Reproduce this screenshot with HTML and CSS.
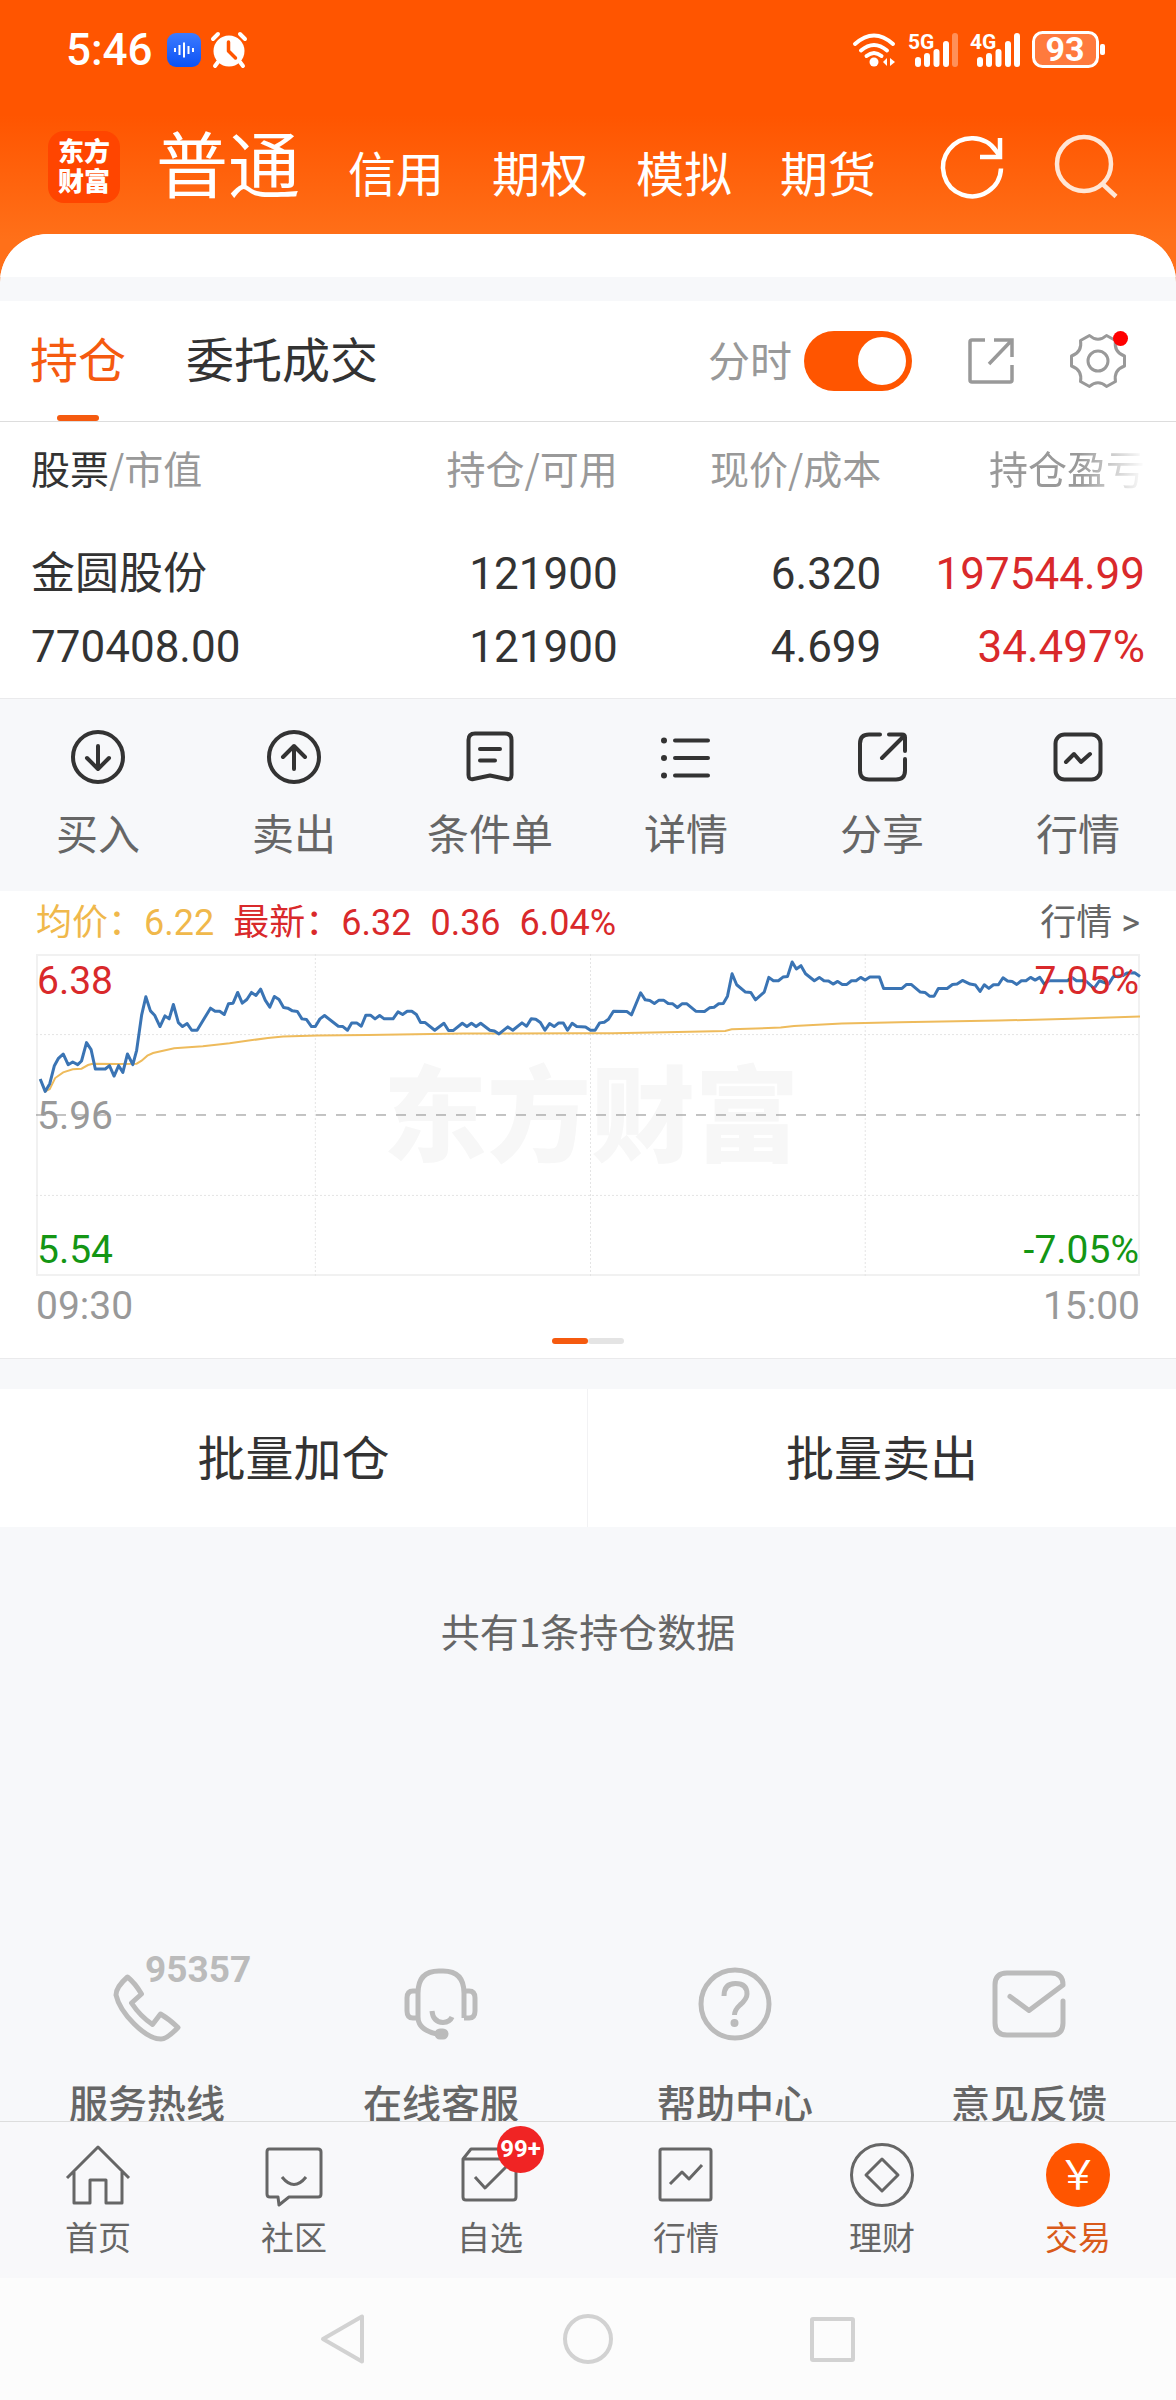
FILE: index.html
```html
<!DOCTYPE html>
<html lang="zh-CN">
<head>
<meta charset="utf-8">
<meta name="viewport" content="width=device-width, initial-scale=1">
<title>持仓 - 东方财富</title>
<link rel="stylesheet" href="styles.css">
</head>
<body>
<div class="page">

  <div class="status">
    <span class="status-time">5:46</span>
    <svg class="status-mic" width="34" height="34" viewBox="0 0 34 34" aria-hidden="true">
      <defs><linearGradient id="mic" x1="0" y1="0" x2="0" y2="1"><stop offset="0" stop-color="#3d7bff"/><stop offset="1" stop-color="#0b52f5"/></linearGradient></defs>
      <rect width="34" height="34" rx="9" fill="url(#mic)"/>
      <path d="M8 15v4M12.500 12v10M17 9.500v15M21.500 13v8M26 15v4" stroke="#fff" stroke-width="2"/>
    </svg>
    <svg class="status-alarm" width="36" height="36" viewBox="0 0 36 36" aria-hidden="true">
      <circle cx="18" cy="19" r="15.500" fill="#fff"/>
      <path d="M2 7l5-5M34 7l-5-5M7 30l-3 4M29 30l3 4" stroke="#fff" stroke-width="4" stroke-linecap="round"/>
      <path d="M17.500 10v9l7 7" fill="none" stroke="#ff5500" stroke-width="3.500" stroke-linecap="round" stroke-linejoin="round"/>
    </svg>
    <svg class="status-right" width="254" height="38" viewBox="0 0 254 38" aria-label="Wi-Fi 5G 4G 93%">
      <g fill="none" stroke="#fff" stroke-width="4" stroke-linecap="round">
        <path d="M3 13q19-17 38 0M9 19.500q13-11 26 0M14.500 25q7.500-6 15 0"/>
      </g>
      <circle cx="22" cy="31" r="4.500" fill="#fff"/>
      <path d="M35 27v8l-4-4zM38 27v8l5-4z" fill="#fff"/>
      <text class="net" x="56" y="18">5G</text>
      <text class="net" x="118" y="18">4G</text>
      <g stroke="#fff" stroke-width="6" stroke-linecap="round">
        <path d="M66 29v4M75 25v8M84.500 21v12M94 13v20M128 29v4M137 25v8M146.500 21v12M156 13v20M165 5v28"/>
        <path d="M103 5v28" opacity=".35"/>
      </g>
      <rect x="181.500" y="1.500" width="64" height="34" rx="9" fill="#ff7a3d" stroke="#fff" stroke-width="3"/>
      <rect x="248" y="13" width="5" height="11" rx="2" fill="#fff"/>
      <text class="battery" x="213" y="30" text-anchor="middle">93</text>
    </svg>
  </div>

  <header class="topbar">
    <a class="logo" href="#home">东方<br>财富</a>
    <nav class="accounts">
      <a class="account account-on" href="#normal">普通</a>
      <a class="account" href="#credit">信用</a>
      <a class="account" href="#option">期权</a>
      <a class="account" href="#sim">模拟</a>
      <a class="account" href="#futures">期货</a>
    </nav>
    <button class="icon-btn" type="button" aria-label="刷新">
      <svg width="64" height="64" viewBox="0 0 64 64" fill="none" stroke="#fff" stroke-width="4.500">
        <path d="M61 33.500A29 29 0 1 1 56 16L60 21"/><path d="M60 3v19H40"/>
      </svg>
    </button>
    <button class="icon-btn icon-search" type="button" aria-label="搜索">
      <svg width="64" height="64" viewBox="0 0 64 64" fill="none" stroke="#ffe6d6" stroke-width="4.500">
        <circle cx="30" cy="29" r="27"/><path d="M48 48.500l14 13"/>
      </svg>
    </button>
  </header>

  <main class="sheet">
    <div class="sheet-lip"></div>

    <section class="tabs">
      <button class="tab tab-on" type="button">持仓</button>
      <button class="tab" type="button">委托成交</button>
      <label class="switch-label" for="minute">分时</label>
      <input class="switch" id="minute" type="checkbox" checked>
      <button class="icon-btn tool" type="button" aria-label="导出">
        <svg width="48" height="48" viewBox="0 0 48 48" fill="none" stroke="#999" stroke-width="3.500">
          <path d="M18 3H5q-2 0-2 2v38q0 2 2 2h38q2 0 2-2V28"/><path d="M27 3h18v17M45 3L22 27"/>
        </svg>
      </button>
      <button class="icon-btn tool" type="button" aria-label="设置">
        <svg width="56" height="56" viewBox="-28 -28 56 56" fill="none" stroke="#999" stroke-width="3" stroke-linejoin="round">
          <path d="M-8.500-25.500Q0-18 8.500-25.500L17.500-20.500Q15.500-9 26.500-5V5Q15.500 9 17.500 20.500L8.500 25.500Q0 18-8.500 25.500L-17.500 20.500Q-15.500 9-26.500 5V-5Q-15.500-9-17.500-20.500Z"/>
          <circle r="10"/>
        </svg>
        <span class="dot"></span>
      </button>
    </section>

    <table class="holdings">
      <thead>
        <tr>
          <th class="c-name"><strong>股票</strong>/市值</th>
          <th>持仓/可用</th>
          <th>现价/成本</th>
          <th><span class="fade">持仓盈亏</span></th>
        </tr>
      </thead>
      <tbody>
        <tr>
          <td><span>金圆股份</span><span>770408.00</span></td>
          <td><span>121900</span><span>121900</span></td>
          <td><span>6.320</span><span>4.699</span></td>
          <td class="up"><span>197544.99</span><span>34.497%</span></td>
        </tr>
      </tbody>
    </table>

    <nav class="actions">
      <button class="action" type="button">
        <svg width="60" height="60" viewBox="0 0 60 60"><circle cx="30" cy="30" r="25"/><path d="M30 19v23M19 31l11 11 11-11"/></svg>买入
      </button>
      <button class="action" type="button">
        <svg width="60" height="60" viewBox="0 0 60 60"><circle cx="30" cy="30" r="25"/><path d="M30 42V19M19 30l11-11 11 11"/></svg>卖出
      </button>
      <button class="action" type="button">
        <svg width="60" height="60" viewBox="0 0 60 60"><path d="M15 6.500h30q6.500 0 6.500 6.500v35q0 5-5 4L30 48.500 13.500 52q-5 1-5-4V13q0-6.500 6.500-6.500zM20 22h20M20 33.500h15"/></svg>条件单
      </button>
      <button class="action" type="button">
        <svg width="60" height="60" viewBox="0 0 60 60"><path d="M19 13.500h33M19 31h33M19 48.500h33"/><g class="dots"><circle cx="8" cy="13.500" r="3"/><circle cx="8" cy="31" r="3"/><circle cx="8" cy="48.500" r="3"/></g></svg>详情
      </button>
      <button class="action" type="button">
        <svg width="60" height="60" viewBox="0 0 60 60"><path d="M28 7.500H17q-9 0-9 9v27q0 9 9 9h27q9 0 9-9V32M37 7.500h13q3 0 3 3V24M52 9L30 31"/></svg>分享
      </button>
      <button class="action" type="button">
        <svg width="60" height="60" viewBox="0 0 60 60"><rect x="7.500" y="7.500" width="45" height="45" rx="9"/><path d="M18 35l8-8 7 8 9-8"/></svg>行情
      </button>
    </nav>

    <section class="chart">
      <div class="quote">
        <span class="avg">均价：6.22</span>
        <span class="up">最新：6.32</span>
        <span class="up">0.36</span>
        <span class="up">6.04%</span>
        <a class="more" href="#quote">行情 &gt;</a>
      </div>
      <div class="plot">
        <span class="watermark" aria-hidden="true">东方财富</span>
        <svg class="lines" viewBox="94 42 2885 963" preserveAspectRatio="none" aria-label="分时走势">
          <g class="grid"><path d="M824 42v963M1543 42v963M2261 42v963M94 283h2885M94 764h2885"/></g>
          <path class="base" d="M94 523.500h2885"/>
          <polyline class="l-avg" points="105,416 118,453 130,446 144,413 165,396 190,387 213,385 230,374 242,370 310,371 357,370 370,361 385,346 400,338 455,324 530,318 600,309 650,301 700,293 740,289 830,286 960,284 1210,280 1505,279 1600,279 1740,276 1895,272 1912,267 2040,262 2075,257 2200,250 2350,246 2610,241 2800,236 2979,229"/>
          <polyline class="l-price" points="105,416 118,453 130,430 142,376 152,355 165,341 178,373 190,365 203,373 213,362 226,307 238,328 249,386 275,386 286,376 298,407 310,376 321,396 333,341 347,373 357,330 370,225 381,170 393,212 404,225 418,259 431,227 442,236 453,193 466,247 477,259 489,250 501,270 515,270 550,204 562,213 574,213 586,223 597,191 609,189 621,157 633,189 645,178 657,157 669,166 681,147 693,180 705,201 717,169 729,178 741,202 752,204 764,212 777,214 789,236 801,238 814,259 824,259 836,236 848,226 884,258 896,259 908,270 919,248 932,248 944,258 956,225 968,225 980,236 992,226 1004,236 1027,236 1040,215 1052,223 1064,213 1076,213 1088,223 1099,247 1111,247 1136,270 1160,249 1172,271 1184,271 1208,249 1220,259 1232,249 1244,259 1256,249 1280,270 1292,272 1304,281 1327,260 1340,270 1364,248 1376,258 1388,236 1400,237 1412,247 1424,270 1436,250 1448,259 1460,248 1472,248 1483,270 1495,249 1507,259 1530,260 1543,270 1555,270 1567,248 1579,246 1590,237 1603,213 1638,214 1650,224 1674,158 1686,179 1698,181 1710,190 1722,180 1734,180 1746,190 1758,191 1770,202 1782,191 1795,191 1818,213 1841,214 1854,203 1866,201 1878,191 1890,190 1901,168 1913,101 1925,134 1948,156 1962,157 1974,179 1997,156 2009,112 2021,122 2034,122 2046,111 2058,109 2070,66 2081,87 2093,77 2105,101 2128,122 2141,112 2153,122 2165,123 2177,132 2189,124 2201,133 2213,133 2225,122 2237,122 2249,112 2261,120 2273,111 2298,111 2309,145 2357,145 2369,133 2381,133 2405,156 2417,157 2429,168 2441,168 2452,145 2475,145 2489,133 2501,132 2515,121 2535,132 2549,135 2561,154 2572,134 2584,145 2596,134 2609,134 2621,113 2633,123 2645,124 2657,133 2669,122 2681,122 2693,112 2705,120 2717,112 2729,132 2741,122 2789,122 2801,112 2813,122 2837,122 2859,145 2873,122 2897,132 2909,110 2935,106 2945,99 2965,98 2979,109"/>
        </svg>
        <div class="scale">
          <div class="scale-row up"><span>6.38</span><span>7.05%</span></div>
          <div class="scale-row mid"><span>5.96</span></div>
          <div class="scale-row down"><span>5.54</span><span>-7.05%</span></div>
        </div>
      </div>
      <div class="times"><span>09:30</span><span>15:00</span></div>
      <div class="pager"><i class="page-on"></i><i></i></div>
    </section>

    <section class="batch">
      <button class="batch-btn" type="button">批量加仓</button>
      <button class="batch-btn" type="button">批量卖出</button>
    </section>

    <p class="summary">共有1条持仓数据</p>

    <section class="services">
      <a class="service" href="tel:95357">
        <span class="service-icon">
          <svg width="80" height="80" viewBox="0 0 80 80"><path d="M20.500 12Q9 22 9 30C13 48 38 74 54 74Q60 74 71 62.500Q62 54 53.500 49L45.500 59.500Q33 51 24.500 38L34.500 29Q28 18 20.500 12z"/></svg>
          <b class="hotline">95357</b>
        </span>服务热线
      </a>
      <a class="service" href="#chat">
        <svg width="80" height="80" viewBox="0 0 80 80"><path d="M36 69Q17 65 17 52V28Q17 6 38 6h4q21 0 21 22v25M17 26h-5q-6 0-6 7v13q0 7 6 7h5M63 26h5q6 0 6 7v13q0 7-6 7h-5M31 46Q32 57 42 57.500Q49 57 51 52"/><rect class="solid" x="36" y="66" width="9" height="6" rx="3"/></svg>在线客服
      </a>
      <a class="service" href="#help">
        <svg width="80" height="80" viewBox="0 0 80 80"><circle cx="40" cy="39" r="34"/><path d="M29 31Q29 18.500 40.500 18.500Q52 18.500 52 29Q52 34 45 40Q39.500 45 39.500 50"/><circle class="solid" cx="39.500" cy="58" r="1.500"/></svg>帮助中心
      </a>
      <a class="service" href="#feedback">
        <svg width="80" height="80" viewBox="0 0 80 80"><path d="M74 36V58q0 12-12 12H18Q6 70 6 58V20Q6 8 18 8H62Q74 8 74 20L40 45.500 21 31.500" stroke-linecap="round"/></svg>意见反馈
      </a>
    </section>
  </main>

  <nav class="tabbar">
    <a class="bar-item" href="#index">
      <svg width="64" height="64" viewBox="0 0 64 64"><path d="M1 35L32 4l31 31M8 29v31h16V37h16v23h16V29"/></svg>首页
    </a>
    <a class="bar-item" href="#community">
      <svg width="64" height="64" viewBox="0 0 64 64"><path d="M7 6h49q3 0 3 3v42q0 3-3 3H27l-10 8-1-8H8q-3 0-3-3V9q0-3 2-3zM20 34q12 15 24 0"/></svg>社区
    </a>
    <a class="bar-item" href="#watchlist">
      <span class="bar-icon">
        <svg width="64" height="64" viewBox="0 0 64 64"><path d="M5 16h53v38q0 3-3 3H8q-3 0-3-3V16l8-10h42l3 10M17 34l10 11 21-21"/></svg>
        <span class="badge">99+</span>
      </span>自选
    </a>
    <a class="bar-item" href="#market">
      <svg width="64" height="64" viewBox="0 0 64 64"><rect x="6" y="6" width="51" height="51" rx="2"/><path d="M16 41l12-12 7 7 13-14"/></svg>行情
    </a>
    <a class="bar-item" href="#wealth">
      <svg width="64" height="64" viewBox="0 0 64 64"><circle cx="32" cy="32" r="30.500"/><path d="M32 16l16 16-16 16-16-16z"/></svg>理财
    </a>
    <a class="bar-item bar-on" href="#trade">
      <svg width="64" height="64" viewBox="0 0 64 64"><circle class="coin" cx="32" cy="32" r="32"/><text class="yen" x="32" y="46" text-anchor="middle">￥</text></svg>交易
    </a>
  </nav>

  <div class="sysnav">
    <button class="icon-btn" type="button" aria-label="返回"><svg width="56" height="56" viewBox="0 0 56 56"><path d="M47 5.500V50.500L8 28z"/></svg></button>
    <button class="icon-btn" type="button" aria-label="主屏幕"><svg width="56" height="56" viewBox="0 0 56 56"><circle cx="28" cy="28" r="23"/></svg></button>
    <button class="icon-btn" type="button" aria-label="最近任务"><svg width="56" height="56" viewBox="0 0 56 56"><rect x="7" y="8" width="41" height="41" rx="1"/></svg></button>
  </div>
</div>
</body>
</html>
```
FILE: styles.css
```css
* { box-sizing: border-box; }

body {
  margin: 0;
  font-family: "Noto Sans CJK SC", "Noto Sans", sans-serif;
  color: #333;
  background: #f7f8fa;
}

a { color: inherit; text-decoration: none; }

button {
  margin: 0;
  padding: 0;
  border: 0;
  background: none;
  color: inherit;
  font: inherit;
}

svg { display: block; flex: none; overflow: visible; }

/* figures are set in Roboto, Chinese falls through to Noto */
.status, .holdings td, .quote, .scale, .times, .hotline, .badge {
  font-family: Roboto, "Noto Sans CJK SC", sans-serif;
}

.page {
  display: flex;
  flex-direction: column;
  min-height: 100vh;
  background: linear-gradient(#ff5500 115px, #ff7019 240px) no-repeat 0 0 / 100% 300px;
}

.up { color: #d9292b; }
.down { color: #149614; }

/* status bar */
.status {
  display: flex;
  align-items: center;
  height: 100px;
  padding: 0 70px 0 66px;
  color: #fff;
}
.status-time {
  font-size: 44px;
  line-height: 44px;
  font-weight: 500;
}
.status-mic { margin-left: 14px; }
.status-alarm { margin-left: 10px; }
.status-right { margin-left: auto; }
.net { font-size: 21px; font-weight: 700; fill: #fff; }
.battery { font-size: 34px; font-weight: 700; fill: #fff; }

/* account switcher */
.topbar {
  display: flex;
  align-items: center;
  height: 134px;
  padding: 0 58px 0 48px;
  color: #fff;
}
.logo {
  width: 72px;
  height: 72px;
  padding-top: 4px;
  border-radius: 16px;
  background: #ff4500;
  font-size: 26px;
  line-height: 30px;
  font-weight: 900;
  text-align: center;
}
.accounts {
  display: flex;
  align-items: baseline;
  gap: 48px;
  margin-left: 36px;
  padding-bottom: 2px;
  white-space: nowrap;
}
.account { font-size: 48px; line-height: 72px; }
.account-on { font-size: 72px; }
.topbar .icon-btn { margin-left: auto; }
.topbar .icon-search { margin-left: 50px; }
.icon-btn { position: relative; flex: none; }

/* white sheet */
.sheet {
  display: flex;
  flex: 1;
  flex-direction: column;
  overflow: hidden;
  border-radius: 48px 48px 0 0;
  background: #f7f8fa;
}
.sheet-lip {
  height: 43px;
  margin-bottom: 24px;
  background: #fff;
}

.tabs {
  display: flex;
  align-items: center;
  height: 121px;
  padding: 0 50px 0 30px;
  border-bottom: 1px solid #ddd;
  background: #fff;
}
.tab {
  position: relative;
  align-self: stretch;
  margin-right: 60px;
  padding-bottom: 8px;
  font-size: 48px;
  line-height: 60px;
}
.tab-on { color: #f55a0f; }
.tab-on::after {
  content: "";
  position: absolute;
  bottom: 0;
  left: 50%;
  width: 42px;
  height: 6px;
  margin-left: -21px;
  border-radius: 3px;
  background: #f55a0f;
}
.switch-label {
  margin-left: auto;
  padding-bottom: 4px;
  color: #999;
  font-size: 42px;
  line-height: 44px;
}
.switch {
  appearance: none;
  display: flex;
  width: 108px;
  height: 60px;
  margin: 0 0 0 12px;
  padding: 6px;
  border-radius: 30px;
  background: #ccc;
}
.switch::before {
  content: "";
  width: 48px;
  height: 48px;
  border-radius: 50%;
  background: #fff;
}
.switch:checked { justify-content: flex-end; background: #ff5500; }
.tool { margin-left: 55px; }
.dot {
  position: absolute;
  top: -2px;
  right: -2px;
  width: 15px;
  height: 15px;
  border-radius: 50%;
  background: #f00;
}

/* holdings */
.holdings {
  width: 100%;
  table-layout: fixed;
  border-collapse: separate;
  border-spacing: 0;
  padding: 0 31px 14px;
  border-bottom: 1px solid #eaeaec;
  background: #fff;
}
.holdings th {
  padding: 25px 0 51px;
  color: #999;
  font-size: 39px;
  line-height: 40px;
  font-weight: 400;
  text-align: right;
}
.holdings th:first-child { text-align: left; }
.holdings .c-name { width: 29%; }
.holdings strong { color: #333; font-weight: 400; }
.holdings td {
  padding: 0;
  font-size: 44px;
  line-height: 73px;
  text-align: right;
}
.holdings td:first-child { text-align: left; }
.holdings td span { display: block; }
.fade { -webkit-mask-image: linear-gradient(90deg, #000 58%, transparent); mask-image: linear-gradient(90deg, #000 58%, transparent); }

/* row actions */
.actions {
  display: grid;
  grid-template-columns: repeat(6, 1fr);
  padding: 28px 0 37px;
}
.action {
  display: flex;
  flex-direction: column;
  align-items: center;
  gap: 23px;
  color: #666;
  font-size: 42px;
  line-height: 44px;
}
.action svg {
  fill: none;
  stroke: #333;
  stroke-width: 4;
  stroke-linecap: round;
  stroke-linejoin: round;
}
.action .dots { fill: #333; stroke: none; }

/* chart */
.chart {
  padding: 12px 36px 14px;
  border-bottom: 1px solid #eaeaec;
  background: #fff;
}
.quote {
  display: flex;
  gap: 19px;
  font-size: 36px;
  line-height: 40px;
}
.avg { color: #f0b84b; }
.more { margin-left: auto; color: #666; }
.plot {
  position: relative;
  display: flex;
  align-items: center;
  justify-content: center;
  height: 322px;
  margin-top: 11px;
  box-shadow: inset 0 0 0 2px #f1f1f1;
}
.watermark {
  padding: 0 0 12px 6px;
  color: #f7f7f7;
  font-size: 104px;
  line-height: 104px;
  font-weight: 900;
}
.lines {
  position: absolute;
  inset: 0;
  width: 100%;
  height: 100%;
  fill: none;
}
.lines path, .lines polyline { vector-effect: non-scaling-stroke; }
.grid { stroke: #e4e4e4; stroke-width: 1; stroke-dasharray: 2 2; }
.base { stroke: #888; stroke-width: 1; stroke-dasharray: 10 10; }
.l-avg { stroke: #eebb5c; stroke-width: 2; }
.l-price { stroke: #3a74b4; stroke-width: 3; stroke-linejoin: round; }
.scale {
  position: absolute;
  inset: 0;
  display: flex;
  flex-direction: column;
  justify-content: space-between;
  padding: 7px 1px 6px;
  font-size: 39px;
  line-height: 40px;
}
.scale-row { display: flex; justify-content: space-between; }
.mid { color: #999; }
.times {
  display: flex;
  justify-content: space-between;
  margin-top: 10px;
  color: #999;
  font-size: 39px;
  line-height: 40px;
}
.pager { display: flex; justify-content: center; margin-top: 12px; }
.pager i { width: 36px; height: 6px; border-radius: 3px; background: #e4e4e4; }
.pager .page-on { background: #f55a0f; }

/* batch */
.batch {
  display: grid;
  grid-template-columns: 1fr 1fr;
  margin-top: 30px;
  background: #fff;
}
.batch-btn { padding: 36px 0 42px; font-size: 48px; line-height: 60px; }
.batch-btn:first-child { border-right: 1px solid #f2f2f4; }

.summary {
  margin: 0;
  padding: 83px 0 60px;
  color: #666;
  font-size: 39px;
  line-height: 40px;
  text-align: center;
}

/* services */
.services {
  display: grid;
  grid-template-columns: repeat(4, 1fr);
  margin-top: auto;
}
.service {
  display: flex;
  flex-direction: column;
  align-items: center;
  gap: 36px;
  color: #666;
  font-size: 39px;
  line-height: 40px;
  font-weight: 500;
}
.service svg {
  fill: none;
  stroke: #bbb;
  stroke-width: 5;
  stroke-linejoin: round;
}
.service .solid { fill: #bbb; }
.service-icon { position: relative; }
.hotline {
  position: absolute;
  top: -15px;
  left: 38px;
  color: #bbb;
  font-size: 37px;
  line-height: 40px;
}

/* bottom tab bar */
.tabbar {
  display: grid;
  grid-template-columns: repeat(6, 1fr);
  padding: 21px 0 24px;
  border-top: 1px solid #ddd;
  background: #f8f8fa;
}
.bar-item {
  display: flex;
  flex-direction: column;
  align-items: center;
  gap: 11px;
  color: #666;
  font-size: 33px;
  line-height: 36px;
}
.bar-item svg { fill: none; stroke: #666; stroke-width: 3; stroke-linejoin: round; }
.bar-item .coin { fill: #ff5500; stroke: none; }
.bar-item .yen { fill: #fff; stroke: none; font-size: 40px; }
.bar-on { color: #d95a1a; }
.bar-icon { position: relative; }
.badge {
  position: absolute;
  top: -17px;
  right: -22px;
  width: 47px;
  height: 47px;
  border-radius: 50%;
  background: #f02424;
  color: #fff;
  font-size: 24px;
  line-height: 47px;
  font-weight: 700;
  text-align: center;
}

/* system navigation */
.sysnav {
  display: flex;
  justify-content: center;
  gap: 189px;
  padding: 33px 0;
  background: #fcfcfc;
}
.sysnav svg { fill: none; stroke: #d2d2d2; stroke-width: 4; stroke-linejoin: round; }
```
